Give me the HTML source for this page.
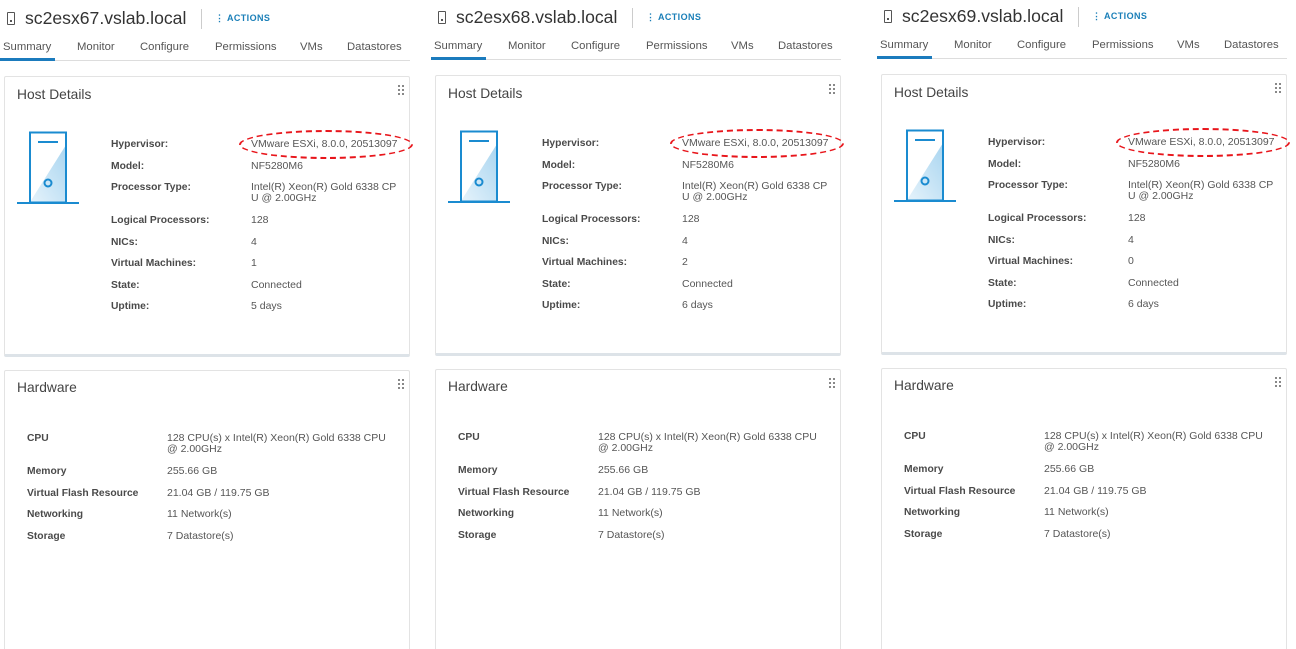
<!DOCTYPE html>
<html><head><meta charset="utf-8"><style>
*{margin:0;padding:0;box-sizing:border-box}
html,body{width:1296px;height:649px;overflow:hidden}
body{background:#fff;position:relative;font-family:"Liberation Sans",sans-serif;color:#333}
.p{position:absolute;width:414px;height:660px;top:0}
.a{position:absolute;white-space:nowrap}
.t{font-size:17.6px;color:#333;left:25px;top:8px}
.ic{left:7px;top:12px;width:8px;height:13px;border:1.3px solid #555;border-radius:1px}
.ic:after{content:"";position:absolute;left:2px;bottom:2px;width:2px;height:2px;background:#555}
.sep{left:201px;top:9px;width:1px;height:20px;background:#ccc}
.act{left:215px;top:13px;font-size:9px;font-weight:bold;color:#1a7fb8;letter-spacing:.4px}
.tab{top:41px;font-size:11.3px;color:#555}
.ul{left:0;top:58px;width:55px;height:3px;background:#1b7bbd}
.gl{left:0;top:60px;width:410px;height:1px;background:#ddd}
.card{position:absolute;left:4px;width:406px;background:#fff;border:1px solid #e3e3e3;border-bottom:3px solid #dde3e8;border-radius:2px}
.h{font-size:13.8px;color:#444}
.l{font-size:10.3px;font-weight:bold;color:#4a4a4a}
.v{font-size:10.5px;color:#565656;line-height:11px}
.ell{left:239px;top:130px;width:174px;height:29px;border:2.8px dashed #e8151b;border-radius:50%}
</style></head><body>

<div class="p" style="left:0;top:0">
<div class="a ic"></div><div class="a t">sc2esx67.vslab.local</div><div class="a sep"></div>
<div class="a act">⋮ ACTIONS</div>
<div class="a tab" style="left:3px">Summary</div><div class="a tab" style="left:77px">Monitor</div><div class="a tab" style="left:140px">Configure</div><div class="a tab" style="left:215px">Permissions</div><div class="a tab" style="left:300px">VMs</div><div class="a tab" style="left:347px">Datastores</div>
<div class="a gl"></div><div class="a ul"></div>
<div class="card" style="top:76px;height:281px"></div>
<div class="a h" style="left:17px;top:87px">Host Details</div>
<svg class="a" style="left:398px;top:85px" width="6" height="10" fill="#888"><rect x="0" y="0" width="2" height="2"/><rect x="4" y="0" width="2" height="2"/><rect x="0" y="4" width="2" height="2"/><rect x="4" y="4" width="2" height="2"/><rect x="0" y="8" width="2" height="2"/><rect x="4" y="8" width="2" height="2"/></svg>
<svg class="a" style="left:17px;top:131px" width="62" height="74"><defs><linearGradient id="g" x1="1" y1="0" x2="0" y2="1"><stop offset="0" stop-color="#a9d5f0"/><stop offset="1" stop-color="#e6f3fb"/></linearGradient></defs><polygon points="49,14 49,71 13,71" fill="url(#g)"/><rect x="13" y="1.5" width="36" height="70" fill="none" stroke="#1a8bd0" stroke-width="2"/><line x1="21" y1="11" x2="41" y2="11" stroke="#1a8bd0" stroke-width="2"/><circle cx="31" cy="52" r="3.5" fill="none" stroke="#1a8bd0" stroke-width="2"/><line x1="0" y1="72" x2="62" y2="72" stroke="#1a8bd0" stroke-width="2"/></svg>
<div class="a l" style="left:111px;top:139px">Hypervisor:</div><div class="a v" style="left:251px;top:139px">VMware ESXi, 8.0.0, 20513097</div>
<div class="a l" style="left:111px;top:161px">Model:</div><div class="a v" style="left:251px;top:161px">NF5280M6</div>
<div class="a l" style="left:111px;top:182px">Processor Type:</div><div class="a v" style="left:251px;top:182px">Intel(R) Xeon(R) Gold 6338 CP<br>U @ 2.00GHz</div>
<div class="a l" style="left:111px;top:215px">Logical Processors:</div><div class="a v" style="left:251px;top:215px">128</div>
<div class="a l" style="left:111px;top:237px">NICs:</div><div class="a v" style="left:251px;top:237px">4</div>
<div class="a l" style="left:111px;top:258px">Virtual Machines:</div><div class="a v" style="left:251px;top:258px">1</div>
<div class="a l" style="left:111px;top:280px">State:</div><div class="a v" style="left:251px;top:280px">Connected</div>
<div class="a l" style="left:111px;top:301px">Uptime:</div><div class="a v" style="left:251px;top:301px">5 days</div>
<div class="a ell"></div>
<div class="card" style="top:370px;height:300px"></div>
<div class="a h" style="left:17px;top:380px">Hardware</div>
<svg class="a" style="left:398px;top:379px" width="6" height="10" fill="#888"><rect x="0" y="0" width="2" height="2"/><rect x="4" y="0" width="2" height="2"/><rect x="0" y="4" width="2" height="2"/><rect x="4" y="4" width="2" height="2"/><rect x="0" y="8" width="2" height="2"/><rect x="4" y="8" width="2" height="2"/></svg>
<div class="a l" style="left:27px;top:433px">CPU</div><div class="a v" style="left:167px;top:433px">128 CPU(s) x Intel(R) Xeon(R) Gold 6338 CPU<br>@ 2.00GHz</div>
<div class="a l" style="left:27px;top:466px">Memory</div><div class="a v" style="left:167px;top:466px">255.66 GB</div>
<div class="a l" style="left:27px;top:488px">Virtual Flash Resource</div><div class="a v" style="left:167px;top:488px">21.04 GB / 119.75 GB</div>
<div class="a l" style="left:27px;top:509px">Networking</div><div class="a v" style="left:167px;top:509px">11 Network(s)</div>
<div class="a l" style="left:27px;top:531px">Storage</div><div class="a v" style="left:167px;top:531px">7 Datastore(s)</div>
</div>

<div class="p" style="left:431px;top:-1px">
<div class="a ic"></div><div class="a t">sc2esx68.vslab.local</div><div class="a sep"></div>
<div class="a act">⋮ ACTIONS</div>
<div class="a tab" style="left:3px">Summary</div><div class="a tab" style="left:77px">Monitor</div><div class="a tab" style="left:140px">Configure</div><div class="a tab" style="left:215px">Permissions</div><div class="a tab" style="left:300px">VMs</div><div class="a tab" style="left:347px">Datastores</div>
<div class="a gl"></div><div class="a ul"></div>
<div class="card" style="top:76px;height:281px"></div>
<div class="a h" style="left:17px;top:87px">Host Details</div>
<svg class="a" style="left:398px;top:85px" width="6" height="10" fill="#888"><rect x="0" y="0" width="2" height="2"/><rect x="4" y="0" width="2" height="2"/><rect x="0" y="4" width="2" height="2"/><rect x="4" y="4" width="2" height="2"/><rect x="0" y="8" width="2" height="2"/><rect x="4" y="8" width="2" height="2"/></svg>
<svg class="a" style="left:17px;top:131px" width="62" height="74"><polygon points="49,14 49,71 13,71" fill="url(#g)"/><rect x="13" y="1.5" width="36" height="70" fill="none" stroke="#1a8bd0" stroke-width="2"/><line x1="21" y1="11" x2="41" y2="11" stroke="#1a8bd0" stroke-width="2"/><circle cx="31" cy="52" r="3.5" fill="none" stroke="#1a8bd0" stroke-width="2"/><line x1="0" y1="72" x2="62" y2="72" stroke="#1a8bd0" stroke-width="2"/></svg>
<div class="a l" style="left:111px;top:139px">Hypervisor:</div><div class="a v" style="left:251px;top:139px">VMware ESXi, 8.0.0, 20513097</div>
<div class="a l" style="left:111px;top:161px">Model:</div><div class="a v" style="left:251px;top:161px">NF5280M6</div>
<div class="a l" style="left:111px;top:182px">Processor Type:</div><div class="a v" style="left:251px;top:182px">Intel(R) Xeon(R) Gold 6338 CP<br>U @ 2.00GHz</div>
<div class="a l" style="left:111px;top:215px">Logical Processors:</div><div class="a v" style="left:251px;top:215px">128</div>
<div class="a l" style="left:111px;top:237px">NICs:</div><div class="a v" style="left:251px;top:237px">4</div>
<div class="a l" style="left:111px;top:258px">Virtual Machines:</div><div class="a v" style="left:251px;top:258px">2</div>
<div class="a l" style="left:111px;top:280px">State:</div><div class="a v" style="left:251px;top:280px">Connected</div>
<div class="a l" style="left:111px;top:301px">Uptime:</div><div class="a v" style="left:251px;top:301px">6 days</div>
<div class="a ell"></div>
<div class="card" style="top:370px;height:300px"></div>
<div class="a h" style="left:17px;top:380px">Hardware</div>
<svg class="a" style="left:398px;top:379px" width="6" height="10" fill="#888"><rect x="0" y="0" width="2" height="2"/><rect x="4" y="0" width="2" height="2"/><rect x="0" y="4" width="2" height="2"/><rect x="4" y="4" width="2" height="2"/><rect x="0" y="8" width="2" height="2"/><rect x="4" y="8" width="2" height="2"/></svg>
<div class="a l" style="left:27px;top:433px">CPU</div><div class="a v" style="left:167px;top:433px">128 CPU(s) x Intel(R) Xeon(R) Gold 6338 CPU<br>@ 2.00GHz</div>
<div class="a l" style="left:27px;top:466px">Memory</div><div class="a v" style="left:167px;top:466px">255.66 GB</div>
<div class="a l" style="left:27px;top:488px">Virtual Flash Resource</div><div class="a v" style="left:167px;top:488px">21.04 GB / 119.75 GB</div>
<div class="a l" style="left:27px;top:509px">Networking</div><div class="a v" style="left:167px;top:509px">11 Network(s)</div>
<div class="a l" style="left:27px;top:531px">Storage</div><div class="a v" style="left:167px;top:531px">7 Datastore(s)</div>
</div>

<div class="p" style="left:877px;top:-2px">
<div class="a ic"></div><div class="a t">sc2esx69.vslab.local</div><div class="a sep"></div>
<div class="a act">⋮ ACTIONS</div>
<div class="a tab" style="left:3px">Summary</div><div class="a tab" style="left:77px">Monitor</div><div class="a tab" style="left:140px">Configure</div><div class="a tab" style="left:215px">Permissions</div><div class="a tab" style="left:300px">VMs</div><div class="a tab" style="left:347px">Datastores</div>
<div class="a gl"></div><div class="a ul"></div>
<div class="card" style="top:76px;height:281px"></div>
<div class="a h" style="left:17px;top:87px">Host Details</div>
<svg class="a" style="left:398px;top:85px" width="6" height="10" fill="#888"><rect x="0" y="0" width="2" height="2"/><rect x="4" y="0" width="2" height="2"/><rect x="0" y="4" width="2" height="2"/><rect x="4" y="4" width="2" height="2"/><rect x="0" y="8" width="2" height="2"/><rect x="4" y="8" width="2" height="2"/></svg>
<svg class="a" style="left:17px;top:131px" width="62" height="74"><polygon points="49,14 49,71 13,71" fill="url(#g)"/><rect x="13" y="1.5" width="36" height="70" fill="none" stroke="#1a8bd0" stroke-width="2"/><line x1="21" y1="11" x2="41" y2="11" stroke="#1a8bd0" stroke-width="2"/><circle cx="31" cy="52" r="3.5" fill="none" stroke="#1a8bd0" stroke-width="2"/><line x1="0" y1="72" x2="62" y2="72" stroke="#1a8bd0" stroke-width="2"/></svg>
<div class="a l" style="left:111px;top:139px">Hypervisor:</div><div class="a v" style="left:251px;top:139px">VMware ESXi, 8.0.0, 20513097</div>
<div class="a l" style="left:111px;top:161px">Model:</div><div class="a v" style="left:251px;top:161px">NF5280M6</div>
<div class="a l" style="left:111px;top:182px">Processor Type:</div><div class="a v" style="left:251px;top:182px">Intel(R) Xeon(R) Gold 6338 CP<br>U @ 2.00GHz</div>
<div class="a l" style="left:111px;top:215px">Logical Processors:</div><div class="a v" style="left:251px;top:215px">128</div>
<div class="a l" style="left:111px;top:237px">NICs:</div><div class="a v" style="left:251px;top:237px">4</div>
<div class="a l" style="left:111px;top:258px">Virtual Machines:</div><div class="a v" style="left:251px;top:258px">0</div>
<div class="a l" style="left:111px;top:280px">State:</div><div class="a v" style="left:251px;top:280px">Connected</div>
<div class="a l" style="left:111px;top:301px">Uptime:</div><div class="a v" style="left:251px;top:301px">6 days</div>
<div class="a ell"></div>
<div class="card" style="top:370px;height:300px"></div>
<div class="a h" style="left:17px;top:380px">Hardware</div>
<svg class="a" style="left:398px;top:379px" width="6" height="10" fill="#888"><rect x="0" y="0" width="2" height="2"/><rect x="4" y="0" width="2" height="2"/><rect x="0" y="4" width="2" height="2"/><rect x="4" y="4" width="2" height="2"/><rect x="0" y="8" width="2" height="2"/><rect x="4" y="8" width="2" height="2"/></svg>
<div class="a l" style="left:27px;top:433px">CPU</div><div class="a v" style="left:167px;top:433px">128 CPU(s) x Intel(R) Xeon(R) Gold 6338 CPU<br>@ 2.00GHz</div>
<div class="a l" style="left:27px;top:466px">Memory</div><div class="a v" style="left:167px;top:466px">255.66 GB</div>
<div class="a l" style="left:27px;top:488px">Virtual Flash Resource</div><div class="a v" style="left:167px;top:488px">21.04 GB / 119.75 GB</div>
<div class="a l" style="left:27px;top:509px">Networking</div><div class="a v" style="left:167px;top:509px">11 Network(s)</div>
<div class="a l" style="left:27px;top:531px">Storage</div><div class="a v" style="left:167px;top:531px">7 Datastore(s)</div>
</div>
</body></html>
